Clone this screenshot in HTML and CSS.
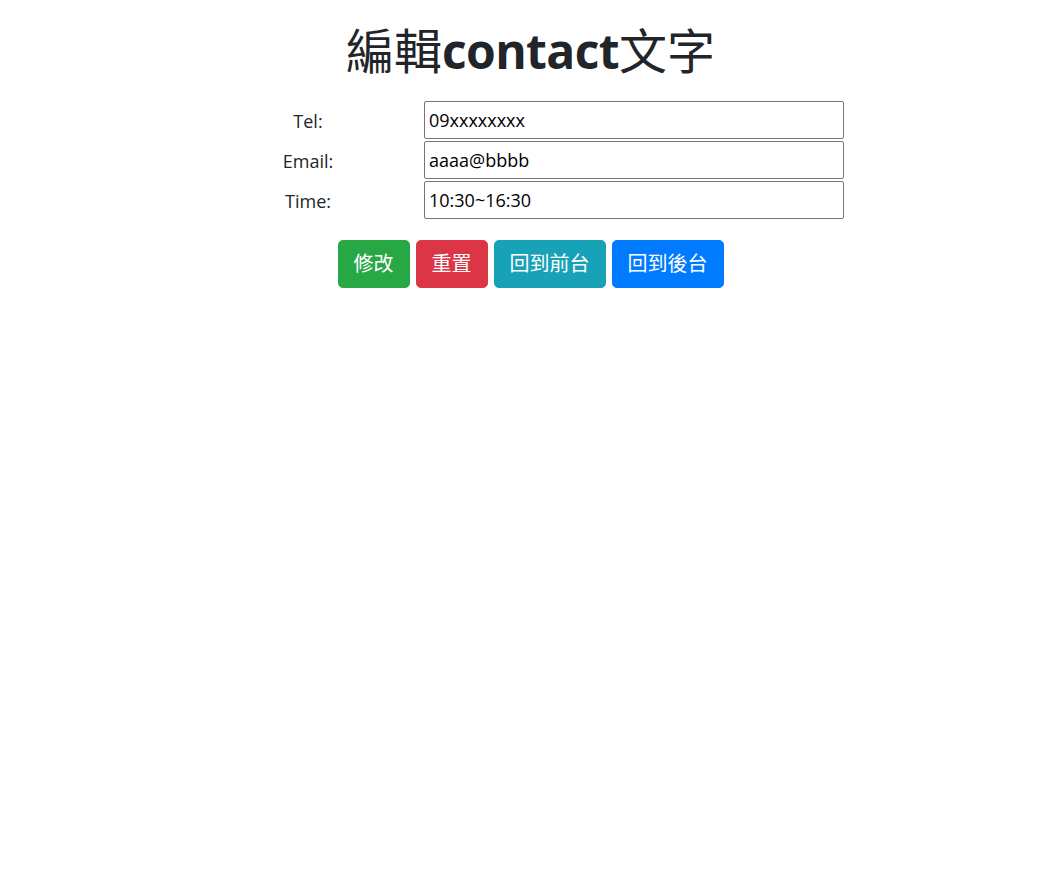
FILE: index.html
```html
<!DOCTYPE html>
<html lang="zh-Hant">
<head>
<meta charset="utf-8">
<title>編輯contact文字</title>
<link rel="stylesheet" href="styles.css">
</head>
<body>
<h1 class="title">編輯<b>contact</b>文字</h1>
<form class="form">
  <div class="grid">
    <label class="label" for="tel">Tel:</label>
    <input class="field" id="tel" type="text" value="09xxxxxxxx">
    <label class="label" for="email">Email:</label>
    <input class="field" id="email" type="text" value="aaaa@bbbb">
    <label class="label" for="time">Time:</label>
    <input class="field" id="time" type="text" value="10:30~16:30">
  </div>
  <div class="buttons">
    <button type="button" class="btn btn-success">修改</button>
    <button type="reset" class="btn btn-danger">重置</button>
    <button type="button" class="btn btn-info">回到前台</button>
    <button type="button" class="btn btn-primary">回到後台</button>
  </div>
</form>
</body>
</html>
```
FILE: styles.css
```css
html, body {
  margin: 0;
  padding: 0;
  background: #fff;
}
body {
  font-family: "Open Sans", "Noto Sans CJK TC", sans-serif;
  color: #212529;
  font-size: 16px;
  line-height: 1.5;
}
.title {
  margin: 22px 0 0;
  text-align: center;
  font-size: 48px;
  font-weight: 400;
  line-height: 1.2;
}
.title b {
  font-weight: 700;
  letter-spacing: -0.6px;
}
.form {
  margin-top: 21px;
}
.grid {
  width: 627px;
  margin: 0 auto;
  display: grid;
  grid-template-columns: 182px 420px;
  column-gap: 25px;
  row-gap: 2px;
  align-items: center;
}
.label {
  text-align: center;
  font-size: 18px;
  color: #212529;
  padding-top: 3px;
}
.field {
  box-sizing: border-box;
  width: 420px;
  height: 38px;
  margin: 0;
  padding: 1px 4px;
  border: 1px solid #767676;
  border-radius: 2px;
  font-family: "Open Sans", sans-serif;
  font-size: 18px;
  color: #000;
  background: #fff;
}
.buttons {
  margin-top: 21px;
  display: flex;
  justify-content: center;
  gap: 6px;
}
.btn {
  font-family: "Open Sans", "Noto Sans CJK TC", sans-serif;
  font-size: 20px;
  line-height: 30px;
  padding: 8px 15px;
  border: 1px solid transparent;
  border-radius: 4.8px;
  color: #fff;
  cursor: pointer;
}
.btn-success { background: #28a745; border-color: #28a745; }
.btn-danger { background: #dc3545; border-color: #dc3545; }
.btn-info { background: #17a2b8; border-color: #17a2b8; }
.btn-primary { background: #007bff; border-color: #007bff; }
```
